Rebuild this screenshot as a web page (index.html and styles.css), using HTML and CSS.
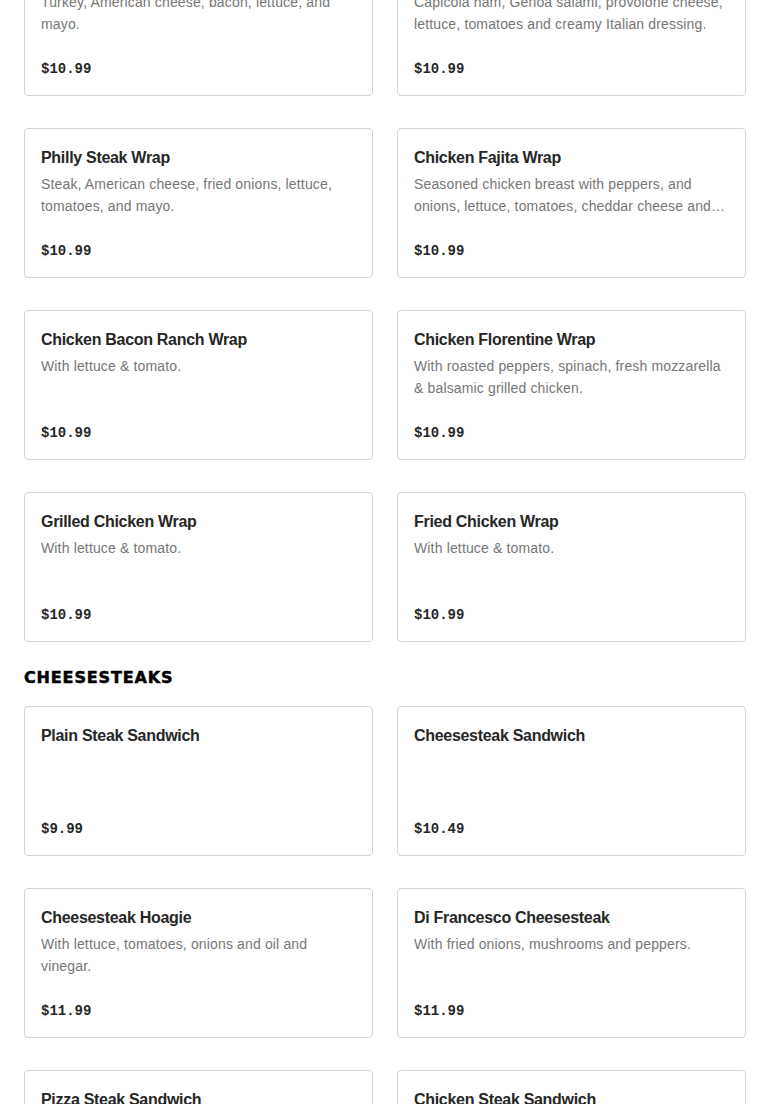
FILE: index.html
```html
<!DOCTYPE html>
<html lang="en">
<head>
  <meta charset="UTF-8">
  <title>Menu</title>
  <meta name="viewport" content="width=device-width, initial-scale=1">
  <link rel="stylesheet" href="styles.css">
</head>
<body>
  <main class="menu">
    <section class="menu-section first">
      <div class="grid">
        <div class="item">
          <div class="item-name">Turkey Club Wrap</div>
          <div class="item-desc">Turkey, American cheese, bacon, lettuce, and mayo.</div>
          <div class="item-price">$10.99</div>
        </div>
        <div class="item">
          <div class="item-name">Italian Wrap</div>
          <div class="item-desc">Capicola ham, Genoa salami, provolone cheese, lettuce, tomatoes and creamy Italian dressing.</div>
          <div class="item-price">$10.99</div>
        </div>
        <div class="item">
          <div class="item-name">Philly Steak Wrap</div>
          <div class="item-desc">Steak, American cheese, fried onions, lettuce, tomatoes, and mayo.</div>
          <div class="item-price">$10.99</div>
        </div>
        <div class="item">
          <div class="item-name">Chicken Fajita Wrap</div>
          <div class="item-desc">Seasoned chicken breast with peppers, and onions, lettuce, tomatoes, cheddar cheese and salsa.</div>
          <div class="item-price">$10.99</div>
        </div>
        <div class="item">
          <div class="item-name">Chicken Bacon Ranch Wrap</div>
          <div class="item-desc">With lettuce &amp; tomato.</div>
          <div class="item-price">$10.99</div>
        </div>
        <div class="item">
          <div class="item-name">Chicken Florentine Wrap</div>
          <div class="item-desc">With roasted peppers, spinach, fresh mozzarella &amp; balsamic grilled chicken.</div>
          <div class="item-price">$10.99</div>
        </div>
        <div class="item">
          <div class="item-name">Grilled Chicken Wrap</div>
          <div class="item-desc">With lettuce &amp; tomato.</div>
          <div class="item-price">$10.99</div>
        </div>
        <div class="item">
          <div class="item-name">Fried Chicken Wrap</div>
          <div class="item-desc">With lettuce &amp; tomato.</div>
          <div class="item-price">$10.99</div>
        </div>
      </div>
    </section>

    <section class="menu-section">
      <h2>CHEESESTEAKS</h2>
      <div class="grid">
        <div class="item">
          <div class="item-name">Plain Steak Sandwich</div>
          <div class="item-price">$9.99</div>
        </div>
        <div class="item">
          <div class="item-name">Cheesesteak Sandwich</div>
          <div class="item-price">$10.49</div>
        </div>
        <div class="item">
          <div class="item-name">Cheesesteak Hoagie</div>
          <div class="item-desc">With lettuce, tomatoes, onions and oil and vinegar.</div>
          <div class="item-price">$11.99</div>
        </div>
        <div class="item">
          <div class="item-name">Di Francesco Cheesesteak</div>
          <div class="item-desc">With fried onions, mushrooms and peppers.</div>
          <div class="item-price">$11.99</div>
        </div>
        <div class="item">
          <div class="item-name">Pizza Steak Sandwich</div>
          <div class="item-desc">With pizza sauce and mozzarella cheese.</div>
          <div class="item-price">$11.49</div>
        </div>
        <div class="item">
          <div class="item-name">Chicken Steak Sandwich</div>
          <div class="item-desc">With American cheese.</div>
          <div class="item-price">$10.99</div>
        </div>
      </div>
    </section>
  </main>
</body>
</html>
```

FILE: styles.css
```css
body {
  margin: 0;
  background: #fff;
  font-family: 'Liberation Sans', Arial, sans-serif;
  color: #262626;
}

.menu {
  padding: 0 24px;
}

/* page is scrolled part way into the wraps list */
.menu-section.first {
  margin-top: -54px;
}

.menu-section h2 {
  margin: 24px 0 16px;
  font-family: 'DejaVu Sans', 'Liberation Sans', sans-serif;
  font-size: 16px;
  line-height: 24px;
  font-weight: bold;
  letter-spacing: 0.85px;
  color: #000;
  -webkit-text-stroke: 0.5px #000;
}

.grid {
  display: grid;
  grid-template-columns: 1fr 1fr;
  column-gap: 24px;
  row-gap: 32px;
}

.item {
  display: flex;
  flex-direction: column;
  height: 150px;
  box-sizing: border-box;
  padding: 16px;
  border: 1px solid #d3d3d3;
  border-radius: 4px;
  background: #fff;
}

.item-name {
  margin-top: 1px;
  font-size: 16px;
  line-height: 24px;
  font-weight: bold;
  letter-spacing: -0.3px;
  color: #262626;
}

.item-desc {
  margin-top: 3px;
  font-size: 14px;
  line-height: 22px;
  letter-spacing: 0.15px;
  color: #767676;
  display: -webkit-box;
  -webkit-line-clamp: 2;
  -webkit-box-orient: vertical;
  overflow: hidden;
}

.item-price {
  margin-top: auto;
  font-family: 'Liberation Mono', 'Courier New', monospace;
  font-size: 14px;
  line-height: 20px;
  font-weight: bold;
  color: #262626;
}
```
